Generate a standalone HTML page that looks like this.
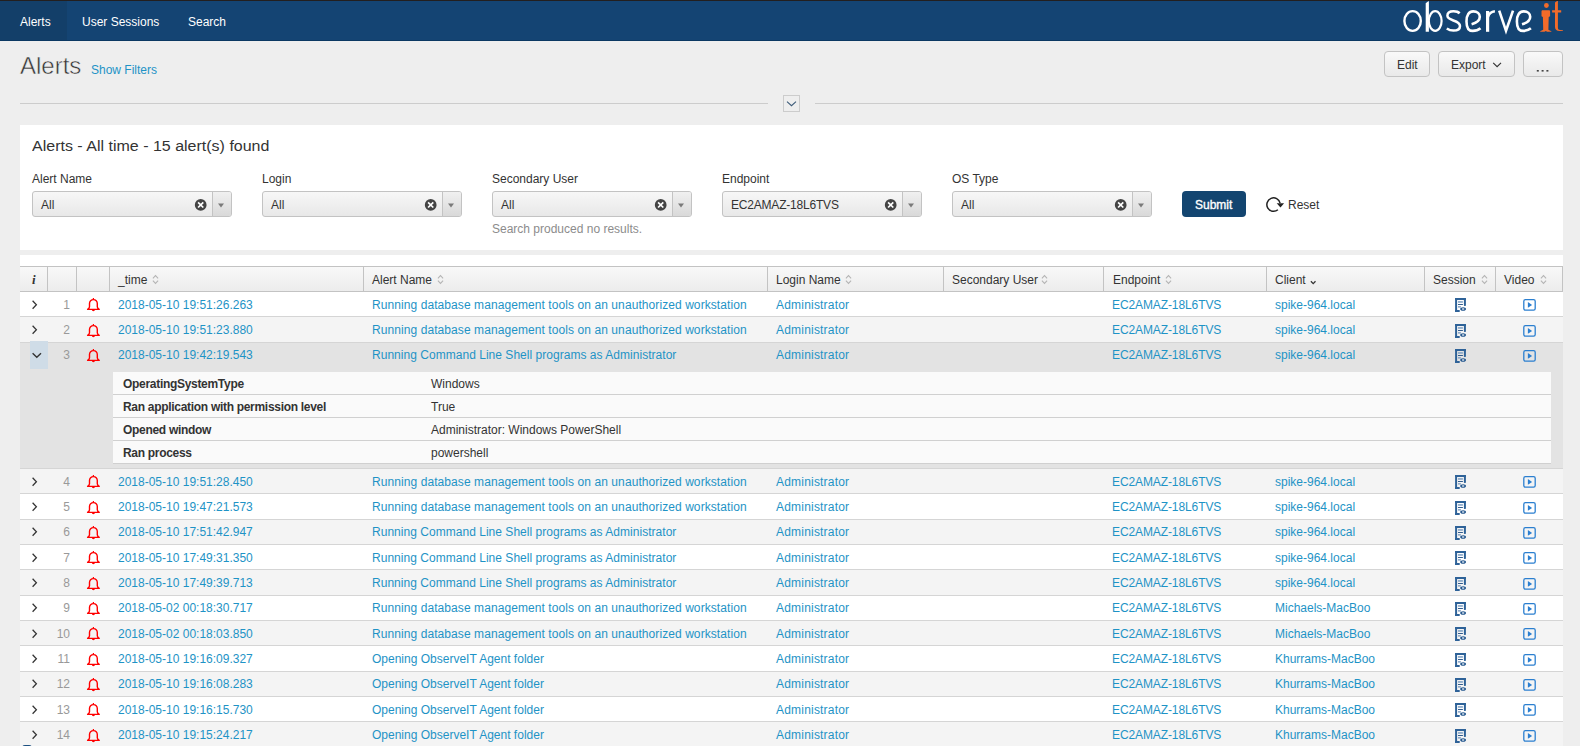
<!DOCTYPE html>
<html><head><meta charset="utf-8"><title>Alerts</title>
<style>
*{box-sizing:border-box}
html,body{margin:0;padding:0}
body{width:1580px;height:746px;overflow:hidden;background:#eeeeee;position:relative;font-family:"Liberation Sans",sans-serif;font-size:12px;color:#333}
.a{position:absolute;white-space:nowrap}
.t12{font-size:12px;line-height:12px}
.nav{position:absolute;left:0;top:0;width:1580px;height:41px;background:#144473;border-top:1px solid #231f1f;border-bottom:1px solid #0b3862}
.navtab{color:#fff}
.lnk{color:#1e93c6}
.btn{position:absolute;height:26px;border:1px solid #c3c3c3;border-radius:4px;background:linear-gradient(#f9f9f9,#e9e9e9)}
.panel{position:absolute;background:#fff}
.sel{position:absolute;width:200px;height:26px;border:1px solid #c3c3c3;border-radius:3px;background:linear-gradient(#f7f7f7,#e8e8e8)}
.sel .sep{position:absolute;left:179px;top:0;width:1px;height:24px;background:#c3c3c3}
.sel .dd{position:absolute;left:180px;top:0;width:18px;height:24px;background:linear-gradient(#f0f0f0,#d9d9d9);border-radius:0 2px 2px 0}
.row{position:absolute;left:20px;width:1543px}
.chev{position:absolute}
.bell,.sess,.vid{position:absolute}
.sort{position:absolute}
.num{color:#999;text-align:right;width:30px}
</style></head><body>

<div class="nav"></div>
<div class="a" style="left:0;top:1px;width:67px;height:39px;background:#133f69"></div>
<span class="a t12 navtab" style="left:20px;top:16px">Alerts</span>
<span class="a t12 navtab" style="left:82px;top:16px">User Sessions</span>
<span class="a t12 navtab" style="left:188px;top:16px">Search</span>
<svg class="a" style="left:1390px;top:0" width="190" height="40" viewBox="0 0 190 40">
<g fill="#fff" stroke="none">

<path d="M35.7 3.2L38.3 1.2h0.6v30.6h-3.2z"/>

</g>
<g fill="none" stroke="#fff">
<ellipse cx="22.6" cy="21" rx="8.2" ry="9.85" stroke-width="2.4"/>
<ellipse cx="45.2" cy="21" rx="6.4" ry="9.85" stroke-width="2.2"/>
<path stroke-width="2.5" d="M69.6 13.3C68 11.5 65.8 11.3 63.5 11.3C59.8 11.3 57.4 13 57.4 15.8C57.4 21.3 70 19.6 70 26C70 29.3 67.2 30.6 63.4 30.6C60.6 30.6 58.4 29.6 56.8 28.4"/>
<path stroke-width="2.6" d="M90.5 28.3C88 30.4 85.5 30.9 82.7 30.9C77.6 30.9 76.5 26.5 76.5 21.4C76.5 14.8 79 11.4 83.2 11.4C87.3 11.4 89.8 13.8 89.8 16.8C89.8 20.4 86.3 23 81.6 24.3"/>
<path stroke-width="3.2" d="M97.6 11V31.8"/>
<path stroke-width="2.4" d="M98 17C99 13.2 101.4 11.6 104.9 11.2"/>
<path stroke-width="2.6" d="M109.2 10.6L116 30.8L123 10.6"/>
<path stroke-width="2.6" d="M140.9 28.3C138.4 30.4 135.9 30.9 133.1 30.9C128 30.9 126.9 26.5 126.9 21.4C126.9 14.8 129.4 11.4 133.6 11.4C137.7 11.4 140.2 13.8 140.2 16.8C140.2 20.4 136.7 23 132 24.3"/>
</g>
<g fill="#f26b2a">
<circle cx="156.4" cy="5.5" r="2.4"/>
<path d="M154 10.2h4.8c0.8 0 1.3 0.5 1.3 1.3v4.8l-1.4 0.8-0.3 12.6c1 0.4 2 0.9 3 1.6v0.5h-4.3l-1.3-0.7-1.3 0.7h-4.3v-0.5c1-0.7 2-1.2 3-1.6l-0.3-12.6-1.4-0.8v-4.8c0-0.8 0.5-1.3 1.3-1.3z"/>
<path d="M165 2.6L167 1h0.9v9.3h3.3v2.1h-3.3v15.4c0 1.5 0.8 2.1 2.2 2.2l2.8 0.3v0.6h-3.4c-2.6 0-4.5-1.1-4.5-4V12.4h-2.9v-2.1h2.9z"/>
</g>
</svg>
<span class="a" style="left:20px;top:54px;font-size:24px;line-height:24px;color:#333;-webkit-text-stroke:0.5px #eeeeee">Alerts</span>
<span class="a t12 lnk" style="left:91px;top:64px">Show Filters</span>
<div class="btn" style="left:1384px;top:51px;width:46px"></div><span class="a t12" style="left:1397px;top:59px;color:#333">Edit</span>
<div class="btn" style="left:1438px;top:51px;width:77px"></div><span class="a t12" style="left:1451px;top:59px;color:#333">Export</span>
<svg class="a" style="left:1492px;top:60px" width="12" height="10"><path d="M1.2 2.9l3.9 3.8 3.9-3.8" fill="none" stroke="#333" stroke-width="1.15"/></svg>
<div class="btn" style="left:1523px;top:51px;width:40px"></div><svg class="a" style="left:1530px;top:60px" width="26" height="16"><g fill="#444"><rect x="6.8" y="10" width="2" height="1.6"/><rect x="11.6" y="10" width="2" height="1.6"/><rect x="16.4" y="10" width="2" height="1.6"/></g></svg>
<div class="a" style="left:20px;top:103px;width:748px;height:1px;background:#cccccc"></div>
<div class="a" style="left:815px;top:103px;width:748px;height:1px;background:#cccccc"></div>
<div class="a" style="left:783px;top:95px;width:17px;height:17px;border:1px solid #cccccc"></div>
<svg class="a" style="left:783px;top:95px" width="17" height="17"><path d="M4 6.6l4.5 4.1 4.5-4.1" fill="none" stroke="#3b5a78" stroke-width="1.05"/></svg>
<div class="panel" style="left:20px;top:125px;width:1543px;height:125px"></div>
<span class="a" style="left:32px;top:139px;font-size:16px;line-height:16px;color:#333;transform:scaleY(0.92);transform-origin:0 0">Alerts - All time - 15 alert(s) found</span>
<span class="a t12" style="left:32px;top:173px;color:#333">Alert Name</span>
<div class="sel" style="left:32px;top:191px"><div class="sep"></div><div class="dd"></div></div>
<span class="a t12" style="left:41px;top:199px;color:#333;letter-spacing:0">All</span>
<svg class="a" style="left:194px;top:198px" width="14" height="14"><circle cx="6.7" cy="6.9" r="5.9" fill="#444"/><path d="M4.1 4.3l5.2 5.2M9.3 4.3l-5.2 5.2" stroke="#fff" stroke-width="1.7"/></svg>
<svg class="a" style="left:216px;top:201px" width="10" height="10"><path d="M2 2.6h6l-3 4z" fill="#7a7a7a"/></svg>
<span class="a t12" style="left:262px;top:173px;color:#333">Login</span>
<div class="sel" style="left:262px;top:191px"><div class="sep"></div><div class="dd"></div></div>
<span class="a t12" style="left:271px;top:199px;color:#333;letter-spacing:0">All</span>
<svg class="a" style="left:424px;top:198px" width="14" height="14"><circle cx="6.7" cy="6.9" r="5.9" fill="#444"/><path d="M4.1 4.3l5.2 5.2M9.3 4.3l-5.2 5.2" stroke="#fff" stroke-width="1.7"/></svg>
<svg class="a" style="left:446px;top:201px" width="10" height="10"><path d="M2 2.6h6l-3 4z" fill="#7a7a7a"/></svg>
<span class="a t12" style="left:492px;top:173px;color:#333">Secondary User</span>
<div class="sel" style="left:492px;top:191px"><div class="sep"></div><div class="dd"></div></div>
<span class="a t12" style="left:501px;top:199px;color:#333;letter-spacing:0">All</span>
<svg class="a" style="left:654px;top:198px" width="14" height="14"><circle cx="6.7" cy="6.9" r="5.9" fill="#444"/><path d="M4.1 4.3l5.2 5.2M9.3 4.3l-5.2 5.2" stroke="#fff" stroke-width="1.7"/></svg>
<svg class="a" style="left:676px;top:201px" width="10" height="10"><path d="M2 2.6h6l-3 4z" fill="#7a7a7a"/></svg>
<span class="a t12" style="left:722px;top:173px;color:#333">Endpoint</span>
<div class="sel" style="left:722px;top:191px"><div class="sep"></div><div class="dd"></div></div>
<span class="a t12" style="left:731px;top:199px;color:#333;letter-spacing:-0.2px">EC2AMAZ-18L6TVS</span>
<svg class="a" style="left:884px;top:198px" width="14" height="14"><circle cx="6.7" cy="6.9" r="5.9" fill="#444"/><path d="M4.1 4.3l5.2 5.2M9.3 4.3l-5.2 5.2" stroke="#fff" stroke-width="1.7"/></svg>
<svg class="a" style="left:906px;top:201px" width="10" height="10"><path d="M2 2.6h6l-3 4z" fill="#7a7a7a"/></svg>
<span class="a t12" style="left:952px;top:173px;color:#333">OS Type</span>
<div class="sel" style="left:952px;top:191px"><div class="sep"></div><div class="dd"></div></div>
<span class="a t12" style="left:961px;top:199px;color:#333;letter-spacing:0">All</span>
<svg class="a" style="left:1114px;top:198px" width="14" height="14"><circle cx="6.7" cy="6.9" r="5.9" fill="#444"/><path d="M4.1 4.3l5.2 5.2M9.3 4.3l-5.2 5.2" stroke="#fff" stroke-width="1.7"/></svg>
<svg class="a" style="left:1136px;top:201px" width="10" height="10"><path d="M2 2.6h6l-3 4z" fill="#7a7a7a"/></svg>
<span class="a t12" style="left:492px;top:223px;color:#8c8c8c">Search produced no results.</span>
<div class="a" style="left:1182px;top:191px;width:64px;height:26px;background:#134570;border-radius:4px"></div>
<span class="a t12" style="left:1195px;top:199px;color:#fff;-webkit-text-stroke:0.35px #fff">Submit</span>
<svg class="a" style="left:1264px;top:195px" width="22" height="20"><path d="M16.1 8.1A6.7 6.7 0 1 0 13.9 14.7" fill="none" stroke="#222" stroke-width="1.5"/><path d="M12.7 8.2h7.4l-3.6 4.2z" fill="#222"/></svg>
<span class="a t12" style="left:1288px;top:199px;color:#333">Reset</span>
<div class="panel" style="left:20px;top:255px;width:1543px;height:491px"></div>
<div class="a" style="left:20px;top:266px;width:1543px;height:26px;background:linear-gradient(#f8f8f8,#ececec);border-top:1px solid #c3c3c3;border-bottom:1px solid #c3c3c3;border-right:1px solid #c3c3c3"></div>
<div class="a" style="left:47px;top:267px;width:1px;height:24px;background:#c3c3c3"></div>
<div class="a" style="left:76px;top:267px;width:1px;height:24px;background:#c3c3c3"></div>
<div class="a" style="left:109px;top:267px;width:1px;height:24px;background:#c3c3c3"></div>
<div class="a" style="left:363px;top:267px;width:1px;height:24px;background:#c3c3c3"></div>
<div class="a" style="left:767px;top:267px;width:1px;height:24px;background:#c3c3c3"></div>
<div class="a" style="left:943px;top:267px;width:1px;height:24px;background:#c3c3c3"></div>
<div class="a" style="left:1103px;top:267px;width:1px;height:24px;background:#c3c3c3"></div>
<div class="a" style="left:1266px;top:267px;width:1px;height:24px;background:#c3c3c3"></div>
<div class="a" style="left:1424px;top:267px;width:1px;height:24px;background:#c3c3c3"></div>
<div class="a" style="left:1495px;top:267px;width:1px;height:24px;background:#c3c3c3"></div>
<span class="a" style="left:32px;top:273px;font:italic bold 13px/13px 'Liberation Serif';color:#333">i</span>
<span class="a t12" style="left:118px;top:274px;color:#333">_time</span>
<span class="a t12" style="left:372px;top:274px;color:#333">Alert Name</span>
<span class="a t12" style="left:776px;top:274px;color:#333">Login Name</span>
<span class="a t12" style="left:952px;top:274px;color:#333">Secondary User</span>
<span class="a t12" style="left:1113px;top:274px;color:#333">Endpoint</span>
<span class="a t12" style="left:1275px;top:274px;color:#333">Client</span>
<span class="a t12" style="left:1433px;top:274px;color:#333">Session</span>
<span class="a t12" style="left:1504px;top:274px;color:#333">Video</span>
<div class="row" style="top:292px;height:25px;background:#ffffff;border-bottom:1px solid #d5d5d5"></div>
<svg class="chev" style="left:30px;top:299px" width="12" height="12" viewBox="0 0 12 12"><path d="M2.6 1.8l3.8 4-3.8 4" fill="none" stroke="#333" stroke-width="1.25"/></svg>
<span class="a t12 num" style="left:40px;top:299px">1</span>
<span class="a t12 lnk" style="left:118px;top:299px">2018-05-10 19:51:26.263</span>
<span class="a t12 lnk" style="left:372px;top:299px;letter-spacing:0.08px">Running database management tools on an unauthorized workstation</span>
<span class="a t12 lnk" style="left:776px;top:299px;letter-spacing:0.2px">Administrator</span>
<span class="a t12 lnk" style="left:1112px;top:299px;letter-spacing:-0.1px">EC2AMAZ-18L6TVS</span>
<span class="a t12 lnk" style="left:1275px;top:299px">spike-964.local</span>
<svg class="bell" style="left:84px;top:294px" width="20" height="20" viewBox="0 0 20 20"><path d="M9.4 5.6c-2.3 0-3.9 1.7-3.9 3.9v3.3c0 1-0.8 1.9-1.9 2.6h11.6c-1.1-0.7-1.9-1.6-1.9-2.6V9.5c0-2.2-1.6-3.9-3.9-3.9z" fill="none" stroke="#f00" stroke-width="1.4" stroke-linejoin="round"/><path d="M9.4 4v1.6" stroke="#f00" stroke-width="1.2"/><path d="M7.8 15.5a1.6 1.7 0 0 0 3.2 0z" fill="#f00"/></svg>
<svg class="sess" style="left:1450px;top:293px" width="20" height="20" viewBox="0 0 20 20"><g fill="#2e6298"><rect x="5.1" y="5" width="2" height="14"/><rect x="5.1" y="5" width="10.8" height="2"/><rect x="13.9" y="5" width="2" height="7.9" rx="0.6"/><rect x="5.1" y="17" width="4.6" height="2"/></g><rect x="8" y="8.2" width="4.9" height="1.5" fill="#7d9ec2"/><rect x="8" y="11.1" width="4.9" height="0.9" fill="#1d4c82"/><rect x="8" y="13.1" width="2.9" height="1.5" fill="#86a4c6"/><ellipse cx="13.1" cy="16" rx="2.9" ry="1.8" fill="#24578e"/><rect x="12.1" y="15.2" width="2.1" height="1.6" fill="#c5d3e2"/></svg>
<svg class="vid" style="left:1519px;top:294px" width="20" height="20" viewBox="0 0 20 20"><rect x="4.8" y="5.6" width="11.4" height="10.6" rx="1.6" fill="none" stroke="#2b7fd0" stroke-width="1.3"/><path d="M8.9 8.1v5.7l4.2-2.85z" fill="#2b7fd0"/></svg>
<div class="row" style="top:317px;height:26px;background:#f4f4f4;border-bottom:1px solid #d5d5d5"></div>
<svg class="chev" style="left:30px;top:324px" width="12" height="12" viewBox="0 0 12 12"><path d="M2.6 1.8l3.8 4-3.8 4" fill="none" stroke="#333" stroke-width="1.25"/></svg>
<span class="a t12 num" style="left:40px;top:324px">2</span>
<span class="a t12 lnk" style="left:118px;top:324px">2018-05-10 19:51:23.880</span>
<span class="a t12 lnk" style="left:372px;top:324px;letter-spacing:0.08px">Running database management tools on an unauthorized workstation</span>
<span class="a t12 lnk" style="left:776px;top:324px;letter-spacing:0.2px">Administrator</span>
<span class="a t12 lnk" style="left:1112px;top:324px;letter-spacing:-0.1px">EC2AMAZ-18L6TVS</span>
<span class="a t12 lnk" style="left:1275px;top:324px">spike-964.local</span>
<svg class="bell" style="left:84px;top:320px" width="20" height="20" viewBox="0 0 20 20"><path d="M9.4 5.6c-2.3 0-3.9 1.7-3.9 3.9v3.3c0 1-0.8 1.9-1.9 2.6h11.6c-1.1-0.7-1.9-1.6-1.9-2.6V9.5c0-2.2-1.6-3.9-3.9-3.9z" fill="none" stroke="#f00" stroke-width="1.4" stroke-linejoin="round"/><path d="M9.4 4v1.6" stroke="#f00" stroke-width="1.2"/><path d="M7.8 15.5a1.6 1.7 0 0 0 3.2 0z" fill="#f00"/></svg>
<svg class="sess" style="left:1450px;top:319px" width="20" height="20" viewBox="0 0 20 20"><g fill="#2e6298"><rect x="5.1" y="5" width="2" height="14"/><rect x="5.1" y="5" width="10.8" height="2"/><rect x="13.9" y="5" width="2" height="7.9" rx="0.6"/><rect x="5.1" y="17" width="4.6" height="2"/></g><rect x="8" y="8.2" width="4.9" height="1.5" fill="#7d9ec2"/><rect x="8" y="11.1" width="4.9" height="0.9" fill="#1d4c82"/><rect x="8" y="13.1" width="2.9" height="1.5" fill="#86a4c6"/><ellipse cx="13.1" cy="16" rx="2.9" ry="1.8" fill="#24578e"/><rect x="12.1" y="15.2" width="2.1" height="1.6" fill="#c5d3e2"/></svg>
<svg class="vid" style="left:1519px;top:320px" width="20" height="20" viewBox="0 0 20 20"><rect x="4.8" y="5.6" width="11.4" height="10.6" rx="1.6" fill="none" stroke="#2b7fd0" stroke-width="1.3"/><path d="M8.9 8.1v5.7l4.2-2.85z" fill="#2b7fd0"/></svg>
<div class="row" style="top:343px;height:126px;background:#e3e3e3;border-bottom:1px solid #d5d5d5"></div>
<div class="a" style="left:30px;top:341px;width:18px;height:28px;background:#cfdce7"></div>
<svg class="chev" style="left:31px;top:350px" width="12" height="12" viewBox="0 0 12 12"><path d="M1.6 3.3l4.2 4 4.2-4" fill="none" stroke="#333" stroke-width="1.4"/></svg>
<span class="a t12 num" style="left:40px;top:349px">3</span>
<span class="a t12 lnk" style="left:118px;top:349px">2018-05-10 19:42:19.543</span>
<span class="a t12 lnk" style="left:372px;top:349px;letter-spacing:0.03px">Running Command Line Shell programs as Administrator</span>
<span class="a t12 lnk" style="left:776px;top:349px;letter-spacing:0.2px">Administrator</span>
<span class="a t12 lnk" style="left:1112px;top:349px;letter-spacing:-0.1px">EC2AMAZ-18L6TVS</span>
<span class="a t12 lnk" style="left:1275px;top:349px">spike-964.local</span>
<svg class="bell" style="left:84px;top:345px" width="20" height="20" viewBox="0 0 20 20"><path d="M9.4 5.6c-2.3 0-3.9 1.7-3.9 3.9v3.3c0 1-0.8 1.9-1.9 2.6h11.6c-1.1-0.7-1.9-1.6-1.9-2.6V9.5c0-2.2-1.6-3.9-3.9-3.9z" fill="none" stroke="#f00" stroke-width="1.4" stroke-linejoin="round"/><path d="M9.4 4v1.6" stroke="#f00" stroke-width="1.2"/><path d="M7.8 15.5a1.6 1.7 0 0 0 3.2 0z" fill="#f00"/></svg>
<svg class="sess" style="left:1450px;top:344px" width="20" height="20" viewBox="0 0 20 20"><g fill="#2e6298"><rect x="5.1" y="5" width="2" height="14"/><rect x="5.1" y="5" width="10.8" height="2"/><rect x="13.9" y="5" width="2" height="7.9" rx="0.6"/><rect x="5.1" y="17" width="4.6" height="2"/></g><rect x="8" y="8.2" width="4.9" height="1.5" fill="#7d9ec2"/><rect x="8" y="11.1" width="4.9" height="0.9" fill="#1d4c82"/><rect x="8" y="13.1" width="2.9" height="1.5" fill="#86a4c6"/><ellipse cx="13.1" cy="16" rx="2.9" ry="1.8" fill="#24578e"/><rect x="12.1" y="15.2" width="2.1" height="1.6" fill="#c5d3e2"/></svg>
<svg class="vid" style="left:1519px;top:345px" width="20" height="20" viewBox="0 0 20 20"><rect x="4.8" y="5.6" width="11.4" height="10.6" rx="1.6" fill="none" stroke="#2b7fd0" stroke-width="1.3"/><path d="M8.9 8.1v5.7l4.2-2.85z" fill="#2b7fd0"/></svg>
<div class="a" style="left:113px;top:372px;width:1438px;height:92px;background:#fafafa;border-bottom:1px solid #d0d0d0"></div>
<span class="a t12" style="left:123px;top:378px;font-weight:bold;letter-spacing:-0.3px;color:#333">OperatingSystemType</span>
<span class="a t12" style="left:431px;top:378px;color:#333">Windows</span>
<div class="a" style="left:113px;top:394px;width:1438px;height:1px;background:#d0d0d0"></div>
<span class="a t12" style="left:123px;top:401px;font-weight:bold;letter-spacing:-0.3px;color:#333">Ran application with permission level</span>
<span class="a t12" style="left:431px;top:401px;color:#333">True</span>
<div class="a" style="left:113px;top:417px;width:1438px;height:1px;background:#d0d0d0"></div>
<span class="a t12" style="left:123px;top:424px;font-weight:bold;letter-spacing:-0.3px;color:#333">Opened window</span>
<span class="a t12" style="left:431px;top:424px;color:#333">Administrator: Windows PowerShell</span>
<div class="a" style="left:113px;top:440px;width:1438px;height:1px;background:#d0d0d0"></div>
<span class="a t12" style="left:123px;top:447px;font-weight:bold;letter-spacing:-0.3px;color:#333">Ran process</span>
<span class="a t12" style="left:431px;top:447px;color:#333">powershell</span>
<div class="row" style="top:469px;height:25px;background:#f4f4f4;border-bottom:1px solid #d5d5d5"></div>
<svg class="chev" style="left:30px;top:476px" width="12" height="12" viewBox="0 0 12 12"><path d="M2.6 1.8l3.8 4-3.8 4" fill="none" stroke="#333" stroke-width="1.25"/></svg>
<span class="a t12 num" style="left:40px;top:476px">4</span>
<span class="a t12 lnk" style="left:118px;top:476px">2018-05-10 19:51:28.450</span>
<span class="a t12 lnk" style="left:372px;top:476px;letter-spacing:0.08px">Running database management tools on an unauthorized workstation</span>
<span class="a t12 lnk" style="left:776px;top:476px;letter-spacing:0.2px">Administrator</span>
<span class="a t12 lnk" style="left:1112px;top:476px;letter-spacing:-0.1px">EC2AMAZ-18L6TVS</span>
<span class="a t12 lnk" style="left:1275px;top:476px">spike-964.local</span>
<svg class="bell" style="left:84px;top:471px" width="20" height="20" viewBox="0 0 20 20"><path d="M9.4 5.6c-2.3 0-3.9 1.7-3.9 3.9v3.3c0 1-0.8 1.9-1.9 2.6h11.6c-1.1-0.7-1.9-1.6-1.9-2.6V9.5c0-2.2-1.6-3.9-3.9-3.9z" fill="none" stroke="#f00" stroke-width="1.4" stroke-linejoin="round"/><path d="M9.4 4v1.6" stroke="#f00" stroke-width="1.2"/><path d="M7.8 15.5a1.6 1.7 0 0 0 3.2 0z" fill="#f00"/></svg>
<svg class="sess" style="left:1450px;top:470px" width="20" height="20" viewBox="0 0 20 20"><g fill="#2e6298"><rect x="5.1" y="5" width="2" height="14"/><rect x="5.1" y="5" width="10.8" height="2"/><rect x="13.9" y="5" width="2" height="7.9" rx="0.6"/><rect x="5.1" y="17" width="4.6" height="2"/></g><rect x="8" y="8.2" width="4.9" height="1.5" fill="#7d9ec2"/><rect x="8" y="11.1" width="4.9" height="0.9" fill="#1d4c82"/><rect x="8" y="13.1" width="2.9" height="1.5" fill="#86a4c6"/><ellipse cx="13.1" cy="16" rx="2.9" ry="1.8" fill="#24578e"/><rect x="12.1" y="15.2" width="2.1" height="1.6" fill="#c5d3e2"/></svg>
<svg class="vid" style="left:1519px;top:471px" width="20" height="20" viewBox="0 0 20 20"><rect x="4.8" y="5.6" width="11.4" height="10.6" rx="1.6" fill="none" stroke="#2b7fd0" stroke-width="1.3"/><path d="M8.9 8.1v5.7l4.2-2.85z" fill="#2b7fd0"/></svg>
<div class="row" style="top:494px;height:26px;background:#ffffff;border-bottom:1px solid #d5d5d5"></div>
<svg class="chev" style="left:30px;top:501px" width="12" height="12" viewBox="0 0 12 12"><path d="M2.6 1.8l3.8 4-3.8 4" fill="none" stroke="#333" stroke-width="1.25"/></svg>
<span class="a t12 num" style="left:40px;top:501px">5</span>
<span class="a t12 lnk" style="left:118px;top:501px">2018-05-10 19:47:21.573</span>
<span class="a t12 lnk" style="left:372px;top:501px;letter-spacing:0.08px">Running database management tools on an unauthorized workstation</span>
<span class="a t12 lnk" style="left:776px;top:501px;letter-spacing:0.2px">Administrator</span>
<span class="a t12 lnk" style="left:1112px;top:501px;letter-spacing:-0.1px">EC2AMAZ-18L6TVS</span>
<span class="a t12 lnk" style="left:1275px;top:501px">spike-964.local</span>
<svg class="bell" style="left:84px;top:497px" width="20" height="20" viewBox="0 0 20 20"><path d="M9.4 5.6c-2.3 0-3.9 1.7-3.9 3.9v3.3c0 1-0.8 1.9-1.9 2.6h11.6c-1.1-0.7-1.9-1.6-1.9-2.6V9.5c0-2.2-1.6-3.9-3.9-3.9z" fill="none" stroke="#f00" stroke-width="1.4" stroke-linejoin="round"/><path d="M9.4 4v1.6" stroke="#f00" stroke-width="1.2"/><path d="M7.8 15.5a1.6 1.7 0 0 0 3.2 0z" fill="#f00"/></svg>
<svg class="sess" style="left:1450px;top:496px" width="20" height="20" viewBox="0 0 20 20"><g fill="#2e6298"><rect x="5.1" y="5" width="2" height="14"/><rect x="5.1" y="5" width="10.8" height="2"/><rect x="13.9" y="5" width="2" height="7.9" rx="0.6"/><rect x="5.1" y="17" width="4.6" height="2"/></g><rect x="8" y="8.2" width="4.9" height="1.5" fill="#7d9ec2"/><rect x="8" y="11.1" width="4.9" height="0.9" fill="#1d4c82"/><rect x="8" y="13.1" width="2.9" height="1.5" fill="#86a4c6"/><ellipse cx="13.1" cy="16" rx="2.9" ry="1.8" fill="#24578e"/><rect x="12.1" y="15.2" width="2.1" height="1.6" fill="#c5d3e2"/></svg>
<svg class="vid" style="left:1519px;top:497px" width="20" height="20" viewBox="0 0 20 20"><rect x="4.8" y="5.6" width="11.4" height="10.6" rx="1.6" fill="none" stroke="#2b7fd0" stroke-width="1.3"/><path d="M8.9 8.1v5.7l4.2-2.85z" fill="#2b7fd0"/></svg>
<div class="row" style="top:520px;height:25px;background:#f4f4f4;border-bottom:1px solid #d5d5d5"></div>
<svg class="chev" style="left:30px;top:526px" width="12" height="12" viewBox="0 0 12 12"><path d="M2.6 1.8l3.8 4-3.8 4" fill="none" stroke="#333" stroke-width="1.25"/></svg>
<span class="a t12 num" style="left:40px;top:526px">6</span>
<span class="a t12 lnk" style="left:118px;top:526px">2018-05-10 17:51:42.947</span>
<span class="a t12 lnk" style="left:372px;top:526px;letter-spacing:0.03px">Running Command Line Shell programs as Administrator</span>
<span class="a t12 lnk" style="left:776px;top:526px;letter-spacing:0.2px">Administrator</span>
<span class="a t12 lnk" style="left:1112px;top:526px;letter-spacing:-0.1px">EC2AMAZ-18L6TVS</span>
<span class="a t12 lnk" style="left:1275px;top:526px">spike-964.local</span>
<svg class="bell" style="left:84px;top:522px" width="20" height="20" viewBox="0 0 20 20"><path d="M9.4 5.6c-2.3 0-3.9 1.7-3.9 3.9v3.3c0 1-0.8 1.9-1.9 2.6h11.6c-1.1-0.7-1.9-1.6-1.9-2.6V9.5c0-2.2-1.6-3.9-3.9-3.9z" fill="none" stroke="#f00" stroke-width="1.4" stroke-linejoin="round"/><path d="M9.4 4v1.6" stroke="#f00" stroke-width="1.2"/><path d="M7.8 15.5a1.6 1.7 0 0 0 3.2 0z" fill="#f00"/></svg>
<svg class="sess" style="left:1450px;top:521px" width="20" height="20" viewBox="0 0 20 20"><g fill="#2e6298"><rect x="5.1" y="5" width="2" height="14"/><rect x="5.1" y="5" width="10.8" height="2"/><rect x="13.9" y="5" width="2" height="7.9" rx="0.6"/><rect x="5.1" y="17" width="4.6" height="2"/></g><rect x="8" y="8.2" width="4.9" height="1.5" fill="#7d9ec2"/><rect x="8" y="11.1" width="4.9" height="0.9" fill="#1d4c82"/><rect x="8" y="13.1" width="2.9" height="1.5" fill="#86a4c6"/><ellipse cx="13.1" cy="16" rx="2.9" ry="1.8" fill="#24578e"/><rect x="12.1" y="15.2" width="2.1" height="1.6" fill="#c5d3e2"/></svg>
<svg class="vid" style="left:1519px;top:522px" width="20" height="20" viewBox="0 0 20 20"><rect x="4.8" y="5.6" width="11.4" height="10.6" rx="1.6" fill="none" stroke="#2b7fd0" stroke-width="1.3"/><path d="M8.9 8.1v5.7l4.2-2.85z" fill="#2b7fd0"/></svg>
<div class="row" style="top:545px;height:25px;background:#ffffff;border-bottom:1px solid #d5d5d5"></div>
<svg class="chev" style="left:30px;top:552px" width="12" height="12" viewBox="0 0 12 12"><path d="M2.6 1.8l3.8 4-3.8 4" fill="none" stroke="#333" stroke-width="1.25"/></svg>
<span class="a t12 num" style="left:40px;top:552px">7</span>
<span class="a t12 lnk" style="left:118px;top:552px">2018-05-10 17:49:31.350</span>
<span class="a t12 lnk" style="left:372px;top:552px;letter-spacing:0.03px">Running Command Line Shell programs as Administrator</span>
<span class="a t12 lnk" style="left:776px;top:552px;letter-spacing:0.2px">Administrator</span>
<span class="a t12 lnk" style="left:1112px;top:552px;letter-spacing:-0.1px">EC2AMAZ-18L6TVS</span>
<span class="a t12 lnk" style="left:1275px;top:552px">spike-964.local</span>
<svg class="bell" style="left:84px;top:547px" width="20" height="20" viewBox="0 0 20 20"><path d="M9.4 5.6c-2.3 0-3.9 1.7-3.9 3.9v3.3c0 1-0.8 1.9-1.9 2.6h11.6c-1.1-0.7-1.9-1.6-1.9-2.6V9.5c0-2.2-1.6-3.9-3.9-3.9z" fill="none" stroke="#f00" stroke-width="1.4" stroke-linejoin="round"/><path d="M9.4 4v1.6" stroke="#f00" stroke-width="1.2"/><path d="M7.8 15.5a1.6 1.7 0 0 0 3.2 0z" fill="#f00"/></svg>
<svg class="sess" style="left:1450px;top:546px" width="20" height="20" viewBox="0 0 20 20"><g fill="#2e6298"><rect x="5.1" y="5" width="2" height="14"/><rect x="5.1" y="5" width="10.8" height="2"/><rect x="13.9" y="5" width="2" height="7.9" rx="0.6"/><rect x="5.1" y="17" width="4.6" height="2"/></g><rect x="8" y="8.2" width="4.9" height="1.5" fill="#7d9ec2"/><rect x="8" y="11.1" width="4.9" height="0.9" fill="#1d4c82"/><rect x="8" y="13.1" width="2.9" height="1.5" fill="#86a4c6"/><ellipse cx="13.1" cy="16" rx="2.9" ry="1.8" fill="#24578e"/><rect x="12.1" y="15.2" width="2.1" height="1.6" fill="#c5d3e2"/></svg>
<svg class="vid" style="left:1519px;top:547px" width="20" height="20" viewBox="0 0 20 20"><rect x="4.8" y="5.6" width="11.4" height="10.6" rx="1.6" fill="none" stroke="#2b7fd0" stroke-width="1.3"/><path d="M8.9 8.1v5.7l4.2-2.85z" fill="#2b7fd0"/></svg>
<div class="row" style="top:570px;height:26px;background:#f4f4f4;border-bottom:1px solid #d5d5d5"></div>
<svg class="chev" style="left:30px;top:577px" width="12" height="12" viewBox="0 0 12 12"><path d="M2.6 1.8l3.8 4-3.8 4" fill="none" stroke="#333" stroke-width="1.25"/></svg>
<span class="a t12 num" style="left:40px;top:577px">8</span>
<span class="a t12 lnk" style="left:118px;top:577px">2018-05-10 17:49:39.713</span>
<span class="a t12 lnk" style="left:372px;top:577px;letter-spacing:0.03px">Running Command Line Shell programs as Administrator</span>
<span class="a t12 lnk" style="left:776px;top:577px;letter-spacing:0.2px">Administrator</span>
<span class="a t12 lnk" style="left:1112px;top:577px;letter-spacing:-0.1px">EC2AMAZ-18L6TVS</span>
<span class="a t12 lnk" style="left:1275px;top:577px">spike-964.local</span>
<svg class="bell" style="left:84px;top:573px" width="20" height="20" viewBox="0 0 20 20"><path d="M9.4 5.6c-2.3 0-3.9 1.7-3.9 3.9v3.3c0 1-0.8 1.9-1.9 2.6h11.6c-1.1-0.7-1.9-1.6-1.9-2.6V9.5c0-2.2-1.6-3.9-3.9-3.9z" fill="none" stroke="#f00" stroke-width="1.4" stroke-linejoin="round"/><path d="M9.4 4v1.6" stroke="#f00" stroke-width="1.2"/><path d="M7.8 15.5a1.6 1.7 0 0 0 3.2 0z" fill="#f00"/></svg>
<svg class="sess" style="left:1450px;top:572px" width="20" height="20" viewBox="0 0 20 20"><g fill="#2e6298"><rect x="5.1" y="5" width="2" height="14"/><rect x="5.1" y="5" width="10.8" height="2"/><rect x="13.9" y="5" width="2" height="7.9" rx="0.6"/><rect x="5.1" y="17" width="4.6" height="2"/></g><rect x="8" y="8.2" width="4.9" height="1.5" fill="#7d9ec2"/><rect x="8" y="11.1" width="4.9" height="0.9" fill="#1d4c82"/><rect x="8" y="13.1" width="2.9" height="1.5" fill="#86a4c6"/><ellipse cx="13.1" cy="16" rx="2.9" ry="1.8" fill="#24578e"/><rect x="12.1" y="15.2" width="2.1" height="1.6" fill="#c5d3e2"/></svg>
<svg class="vid" style="left:1519px;top:573px" width="20" height="20" viewBox="0 0 20 20"><rect x="4.8" y="5.6" width="11.4" height="10.6" rx="1.6" fill="none" stroke="#2b7fd0" stroke-width="1.3"/><path d="M8.9 8.1v5.7l4.2-2.85z" fill="#2b7fd0"/></svg>
<div class="row" style="top:596px;height:25px;background:#ffffff;border-bottom:1px solid #d5d5d5"></div>
<svg class="chev" style="left:30px;top:602px" width="12" height="12" viewBox="0 0 12 12"><path d="M2.6 1.8l3.8 4-3.8 4" fill="none" stroke="#333" stroke-width="1.25"/></svg>
<span class="a t12 num" style="left:40px;top:602px">9</span>
<span class="a t12 lnk" style="left:118px;top:602px">2018-05-02 00:18:30.717</span>
<span class="a t12 lnk" style="left:372px;top:602px;letter-spacing:0.08px">Running database management tools on an unauthorized workstation</span>
<span class="a t12 lnk" style="left:776px;top:602px;letter-spacing:0.2px">Administrator</span>
<span class="a t12 lnk" style="left:1112px;top:602px;letter-spacing:-0.1px">EC2AMAZ-18L6TVS</span>
<span class="a t12 lnk" style="left:1275px;top:602px">Michaels-MacBoo</span>
<svg class="bell" style="left:84px;top:598px" width="20" height="20" viewBox="0 0 20 20"><path d="M9.4 5.6c-2.3 0-3.9 1.7-3.9 3.9v3.3c0 1-0.8 1.9-1.9 2.6h11.6c-1.1-0.7-1.9-1.6-1.9-2.6V9.5c0-2.2-1.6-3.9-3.9-3.9z" fill="none" stroke="#f00" stroke-width="1.4" stroke-linejoin="round"/><path d="M9.4 4v1.6" stroke="#f00" stroke-width="1.2"/><path d="M7.8 15.5a1.6 1.7 0 0 0 3.2 0z" fill="#f00"/></svg>
<svg class="sess" style="left:1450px;top:597px" width="20" height="20" viewBox="0 0 20 20"><g fill="#2e6298"><rect x="5.1" y="5" width="2" height="14"/><rect x="5.1" y="5" width="10.8" height="2"/><rect x="13.9" y="5" width="2" height="7.9" rx="0.6"/><rect x="5.1" y="17" width="4.6" height="2"/></g><rect x="8" y="8.2" width="4.9" height="1.5" fill="#7d9ec2"/><rect x="8" y="11.1" width="4.9" height="0.9" fill="#1d4c82"/><rect x="8" y="13.1" width="2.9" height="1.5" fill="#86a4c6"/><ellipse cx="13.1" cy="16" rx="2.9" ry="1.8" fill="#24578e"/><rect x="12.1" y="15.2" width="2.1" height="1.6" fill="#c5d3e2"/></svg>
<svg class="vid" style="left:1519px;top:598px" width="20" height="20" viewBox="0 0 20 20"><rect x="4.8" y="5.6" width="11.4" height="10.6" rx="1.6" fill="none" stroke="#2b7fd0" stroke-width="1.3"/><path d="M8.9 8.1v5.7l4.2-2.85z" fill="#2b7fd0"/></svg>
<div class="row" style="top:621px;height:25px;background:#f4f4f4;border-bottom:1px solid #d5d5d5"></div>
<svg class="chev" style="left:30px;top:628px" width="12" height="12" viewBox="0 0 12 12"><path d="M2.6 1.8l3.8 4-3.8 4" fill="none" stroke="#333" stroke-width="1.25"/></svg>
<span class="a t12 num" style="left:40px;top:628px">10</span>
<span class="a t12 lnk" style="left:118px;top:628px">2018-05-02 00:18:03.850</span>
<span class="a t12 lnk" style="left:372px;top:628px;letter-spacing:0.08px">Running database management tools on an unauthorized workstation</span>
<span class="a t12 lnk" style="left:776px;top:628px;letter-spacing:0.2px">Administrator</span>
<span class="a t12 lnk" style="left:1112px;top:628px;letter-spacing:-0.1px">EC2AMAZ-18L6TVS</span>
<span class="a t12 lnk" style="left:1275px;top:628px">Michaels-MacBoo</span>
<svg class="bell" style="left:84px;top:623px" width="20" height="20" viewBox="0 0 20 20"><path d="M9.4 5.6c-2.3 0-3.9 1.7-3.9 3.9v3.3c0 1-0.8 1.9-1.9 2.6h11.6c-1.1-0.7-1.9-1.6-1.9-2.6V9.5c0-2.2-1.6-3.9-3.9-3.9z" fill="none" stroke="#f00" stroke-width="1.4" stroke-linejoin="round"/><path d="M9.4 4v1.6" stroke="#f00" stroke-width="1.2"/><path d="M7.8 15.5a1.6 1.7 0 0 0 3.2 0z" fill="#f00"/></svg>
<svg class="sess" style="left:1450px;top:622px" width="20" height="20" viewBox="0 0 20 20"><g fill="#2e6298"><rect x="5.1" y="5" width="2" height="14"/><rect x="5.1" y="5" width="10.8" height="2"/><rect x="13.9" y="5" width="2" height="7.9" rx="0.6"/><rect x="5.1" y="17" width="4.6" height="2"/></g><rect x="8" y="8.2" width="4.9" height="1.5" fill="#7d9ec2"/><rect x="8" y="11.1" width="4.9" height="0.9" fill="#1d4c82"/><rect x="8" y="13.1" width="2.9" height="1.5" fill="#86a4c6"/><ellipse cx="13.1" cy="16" rx="2.9" ry="1.8" fill="#24578e"/><rect x="12.1" y="15.2" width="2.1" height="1.6" fill="#c5d3e2"/></svg>
<svg class="vid" style="left:1519px;top:623px" width="20" height="20" viewBox="0 0 20 20"><rect x="4.8" y="5.6" width="11.4" height="10.6" rx="1.6" fill="none" stroke="#2b7fd0" stroke-width="1.3"/><path d="M8.9 8.1v5.7l4.2-2.85z" fill="#2b7fd0"/></svg>
<div class="row" style="top:646px;height:26px;background:#ffffff;border-bottom:1px solid #d5d5d5"></div>
<svg class="chev" style="left:30px;top:653px" width="12" height="12" viewBox="0 0 12 12"><path d="M2.6 1.8l3.8 4-3.8 4" fill="none" stroke="#333" stroke-width="1.25"/></svg>
<span class="a t12 num" style="left:40px;top:653px">11</span>
<span class="a t12 lnk" style="left:118px;top:653px">2018-05-10 19:16:09.327</span>
<span class="a t12 lnk" style="left:372px;top:653px;letter-spacing:0px">Opening ObserveIT Agent folder</span>
<span class="a t12 lnk" style="left:776px;top:653px;letter-spacing:0.2px">Administrator</span>
<span class="a t12 lnk" style="left:1112px;top:653px;letter-spacing:-0.1px">EC2AMAZ-18L6TVS</span>
<span class="a t12 lnk" style="left:1275px;top:653px">Khurrams-MacBoo</span>
<svg class="bell" style="left:84px;top:649px" width="20" height="20" viewBox="0 0 20 20"><path d="M9.4 5.6c-2.3 0-3.9 1.7-3.9 3.9v3.3c0 1-0.8 1.9-1.9 2.6h11.6c-1.1-0.7-1.9-1.6-1.9-2.6V9.5c0-2.2-1.6-3.9-3.9-3.9z" fill="none" stroke="#f00" stroke-width="1.4" stroke-linejoin="round"/><path d="M9.4 4v1.6" stroke="#f00" stroke-width="1.2"/><path d="M7.8 15.5a1.6 1.7 0 0 0 3.2 0z" fill="#f00"/></svg>
<svg class="sess" style="left:1450px;top:648px" width="20" height="20" viewBox="0 0 20 20"><g fill="#2e6298"><rect x="5.1" y="5" width="2" height="14"/><rect x="5.1" y="5" width="10.8" height="2"/><rect x="13.9" y="5" width="2" height="7.9" rx="0.6"/><rect x="5.1" y="17" width="4.6" height="2"/></g><rect x="8" y="8.2" width="4.9" height="1.5" fill="#7d9ec2"/><rect x="8" y="11.1" width="4.9" height="0.9" fill="#1d4c82"/><rect x="8" y="13.1" width="2.9" height="1.5" fill="#86a4c6"/><ellipse cx="13.1" cy="16" rx="2.9" ry="1.8" fill="#24578e"/><rect x="12.1" y="15.2" width="2.1" height="1.6" fill="#c5d3e2"/></svg>
<svg class="vid" style="left:1519px;top:649px" width="20" height="20" viewBox="0 0 20 20"><rect x="4.8" y="5.6" width="11.4" height="10.6" rx="1.6" fill="none" stroke="#2b7fd0" stroke-width="1.3"/><path d="M8.9 8.1v5.7l4.2-2.85z" fill="#2b7fd0"/></svg>
<div class="row" style="top:672px;height:25px;background:#f4f4f4;border-bottom:1px solid #d5d5d5"></div>
<svg class="chev" style="left:30px;top:678px" width="12" height="12" viewBox="0 0 12 12"><path d="M2.6 1.8l3.8 4-3.8 4" fill="none" stroke="#333" stroke-width="1.25"/></svg>
<span class="a t12 num" style="left:40px;top:678px">12</span>
<span class="a t12 lnk" style="left:118px;top:678px">2018-05-10 19:16:08.283</span>
<span class="a t12 lnk" style="left:372px;top:678px;letter-spacing:0px">Opening ObserveIT Agent folder</span>
<span class="a t12 lnk" style="left:776px;top:678px;letter-spacing:0.2px">Administrator</span>
<span class="a t12 lnk" style="left:1112px;top:678px;letter-spacing:-0.1px">EC2AMAZ-18L6TVS</span>
<span class="a t12 lnk" style="left:1275px;top:678px">Khurrams-MacBoo</span>
<svg class="bell" style="left:84px;top:674px" width="20" height="20" viewBox="0 0 20 20"><path d="M9.4 5.6c-2.3 0-3.9 1.7-3.9 3.9v3.3c0 1-0.8 1.9-1.9 2.6h11.6c-1.1-0.7-1.9-1.6-1.9-2.6V9.5c0-2.2-1.6-3.9-3.9-3.9z" fill="none" stroke="#f00" stroke-width="1.4" stroke-linejoin="round"/><path d="M9.4 4v1.6" stroke="#f00" stroke-width="1.2"/><path d="M7.8 15.5a1.6 1.7 0 0 0 3.2 0z" fill="#f00"/></svg>
<svg class="sess" style="left:1450px;top:673px" width="20" height="20" viewBox="0 0 20 20"><g fill="#2e6298"><rect x="5.1" y="5" width="2" height="14"/><rect x="5.1" y="5" width="10.8" height="2"/><rect x="13.9" y="5" width="2" height="7.9" rx="0.6"/><rect x="5.1" y="17" width="4.6" height="2"/></g><rect x="8" y="8.2" width="4.9" height="1.5" fill="#7d9ec2"/><rect x="8" y="11.1" width="4.9" height="0.9" fill="#1d4c82"/><rect x="8" y="13.1" width="2.9" height="1.5" fill="#86a4c6"/><ellipse cx="13.1" cy="16" rx="2.9" ry="1.8" fill="#24578e"/><rect x="12.1" y="15.2" width="2.1" height="1.6" fill="#c5d3e2"/></svg>
<svg class="vid" style="left:1519px;top:674px" width="20" height="20" viewBox="0 0 20 20"><rect x="4.8" y="5.6" width="11.4" height="10.6" rx="1.6" fill="none" stroke="#2b7fd0" stroke-width="1.3"/><path d="M8.9 8.1v5.7l4.2-2.85z" fill="#2b7fd0"/></svg>
<div class="row" style="top:697px;height:25px;background:#ffffff;border-bottom:1px solid #d5d5d5"></div>
<svg class="chev" style="left:30px;top:704px" width="12" height="12" viewBox="0 0 12 12"><path d="M2.6 1.8l3.8 4-3.8 4" fill="none" stroke="#333" stroke-width="1.25"/></svg>
<span class="a t12 num" style="left:40px;top:704px">13</span>
<span class="a t12 lnk" style="left:118px;top:704px">2018-05-10 19:16:15.730</span>
<span class="a t12 lnk" style="left:372px;top:704px;letter-spacing:0px">Opening ObserveIT Agent folder</span>
<span class="a t12 lnk" style="left:776px;top:704px;letter-spacing:0.2px">Administrator</span>
<span class="a t12 lnk" style="left:1112px;top:704px;letter-spacing:-0.1px">EC2AMAZ-18L6TVS</span>
<span class="a t12 lnk" style="left:1275px;top:704px">Khurrams-MacBoo</span>
<svg class="bell" style="left:84px;top:699px" width="20" height="20" viewBox="0 0 20 20"><path d="M9.4 5.6c-2.3 0-3.9 1.7-3.9 3.9v3.3c0 1-0.8 1.9-1.9 2.6h11.6c-1.1-0.7-1.9-1.6-1.9-2.6V9.5c0-2.2-1.6-3.9-3.9-3.9z" fill="none" stroke="#f00" stroke-width="1.4" stroke-linejoin="round"/><path d="M9.4 4v1.6" stroke="#f00" stroke-width="1.2"/><path d="M7.8 15.5a1.6 1.7 0 0 0 3.2 0z" fill="#f00"/></svg>
<svg class="sess" style="left:1450px;top:698px" width="20" height="20" viewBox="0 0 20 20"><g fill="#2e6298"><rect x="5.1" y="5" width="2" height="14"/><rect x="5.1" y="5" width="10.8" height="2"/><rect x="13.9" y="5" width="2" height="7.9" rx="0.6"/><rect x="5.1" y="17" width="4.6" height="2"/></g><rect x="8" y="8.2" width="4.9" height="1.5" fill="#7d9ec2"/><rect x="8" y="11.1" width="4.9" height="0.9" fill="#1d4c82"/><rect x="8" y="13.1" width="2.9" height="1.5" fill="#86a4c6"/><ellipse cx="13.1" cy="16" rx="2.9" ry="1.8" fill="#24578e"/><rect x="12.1" y="15.2" width="2.1" height="1.6" fill="#c5d3e2"/></svg>
<svg class="vid" style="left:1519px;top:699px" width="20" height="20" viewBox="0 0 20 20"><rect x="4.8" y="5.6" width="11.4" height="10.6" rx="1.6" fill="none" stroke="#2b7fd0" stroke-width="1.3"/><path d="M8.9 8.1v5.7l4.2-2.85z" fill="#2b7fd0"/></svg>
<div class="row" style="top:722px;height:25px;background:#f4f4f4;border-bottom:1px solid #d5d5d5"></div>
<svg class="chev" style="left:30px;top:729px" width="12" height="12" viewBox="0 0 12 12"><path d="M2.6 1.8l3.8 4-3.8 4" fill="none" stroke="#333" stroke-width="1.25"/></svg>
<span class="a t12 num" style="left:40px;top:729px">14</span>
<span class="a t12 lnk" style="left:118px;top:729px">2018-05-10 19:15:24.217</span>
<span class="a t12 lnk" style="left:372px;top:729px;letter-spacing:0px">Opening ObserveIT Agent folder</span>
<span class="a t12 lnk" style="left:776px;top:729px;letter-spacing:0.2px">Administrator</span>
<span class="a t12 lnk" style="left:1112px;top:729px;letter-spacing:-0.1px">EC2AMAZ-18L6TVS</span>
<span class="a t12 lnk" style="left:1275px;top:729px">Khurrams-MacBoo</span>
<svg class="bell" style="left:84px;top:725px" width="20" height="20" viewBox="0 0 20 20"><path d="M9.4 5.6c-2.3 0-3.9 1.7-3.9 3.9v3.3c0 1-0.8 1.9-1.9 2.6h11.6c-1.1-0.7-1.9-1.6-1.9-2.6V9.5c0-2.2-1.6-3.9-3.9-3.9z" fill="none" stroke="#f00" stroke-width="1.4" stroke-linejoin="round"/><path d="M9.4 4v1.6" stroke="#f00" stroke-width="1.2"/><path d="M7.8 15.5a1.6 1.7 0 0 0 3.2 0z" fill="#f00"/></svg>
<svg class="sess" style="left:1450px;top:724px" width="20" height="20" viewBox="0 0 20 20"><g fill="#2e6298"><rect x="5.1" y="5" width="2" height="14"/><rect x="5.1" y="5" width="10.8" height="2"/><rect x="13.9" y="5" width="2" height="7.9" rx="0.6"/><rect x="5.1" y="17" width="4.6" height="2"/></g><rect x="8" y="8.2" width="4.9" height="1.5" fill="#7d9ec2"/><rect x="8" y="11.1" width="4.9" height="0.9" fill="#1d4c82"/><rect x="8" y="13.1" width="2.9" height="1.5" fill="#86a4c6"/><ellipse cx="13.1" cy="16" rx="2.9" ry="1.8" fill="#24578e"/><rect x="12.1" y="15.2" width="2.1" height="1.6" fill="#c5d3e2"/></svg>
<svg class="vid" style="left:1519px;top:725px" width="20" height="20" viewBox="0 0 20 20"><rect x="4.8" y="5.6" width="11.4" height="10.6" rx="1.6" fill="none" stroke="#2b7fd0" stroke-width="1.3"/><path d="M8.9 8.1v5.7l4.2-2.85z" fill="#2b7fd0"/></svg>
<svg class="sort" style="left:152px;top:274px" width="8" height="11" viewBox="0 0 8 11"><path d="M0.9 4.3L3.5 1.6 6.1 4.3M0.9 6.7L3.5 9.4 6.1 6.7" fill="none" stroke="#b4b4b4" stroke-width="1.05"/></svg>
<svg class="sort" style="left:437px;top:274px" width="8" height="11" viewBox="0 0 8 11"><path d="M0.9 4.3L3.5 1.6 6.1 4.3M0.9 6.7L3.5 9.4 6.1 6.7" fill="none" stroke="#b4b4b4" stroke-width="1.05"/></svg>
<svg class="sort" style="left:845px;top:274px" width="8" height="11" viewBox="0 0 8 11"><path d="M0.9 4.3L3.5 1.6 6.1 4.3M0.9 6.7L3.5 9.4 6.1 6.7" fill="none" stroke="#b4b4b4" stroke-width="1.05"/></svg>
<svg class="sort" style="left:1041px;top:274px" width="8" height="11" viewBox="0 0 8 11"><path d="M0.9 4.3L3.5 1.6 6.1 4.3M0.9 6.7L3.5 9.4 6.1 6.7" fill="none" stroke="#b4b4b4" stroke-width="1.05"/></svg>
<svg class="sort" style="left:1165px;top:274px" width="8" height="11" viewBox="0 0 8 11"><path d="M0.9 4.3L3.5 1.6 6.1 4.3M0.9 6.7L3.5 9.4 6.1 6.7" fill="none" stroke="#b4b4b4" stroke-width="1.05"/></svg>
<svg class="sort" style="left:1481px;top:274px" width="8" height="11" viewBox="0 0 8 11"><path d="M0.9 4.3L3.5 1.6 6.1 4.3M0.9 6.7L3.5 9.4 6.1 6.7" fill="none" stroke="#b4b4b4" stroke-width="1.05"/></svg>
<svg class="sort" style="left:1540px;top:274px" width="8" height="11" viewBox="0 0 8 11"><path d="M0.9 4.3L3.5 1.6 6.1 4.3M0.9 6.7L3.5 9.4 6.1 6.7" fill="none" stroke="#b4b4b4" stroke-width="1.05"/></svg>
<svg class="sort" style="left:1310px;top:274px" width="8" height="11" viewBox="0 0 8 11"><path d="M0.9 7.2L3.2 9.6 5.5 7.2" fill="none" stroke="#333" stroke-width="1.3"/></svg>
<div class="a" style="left:22px;top:745px;width:10px;height:6px;border-radius:4px;background:#1b4f80"></div>
</body></html>
